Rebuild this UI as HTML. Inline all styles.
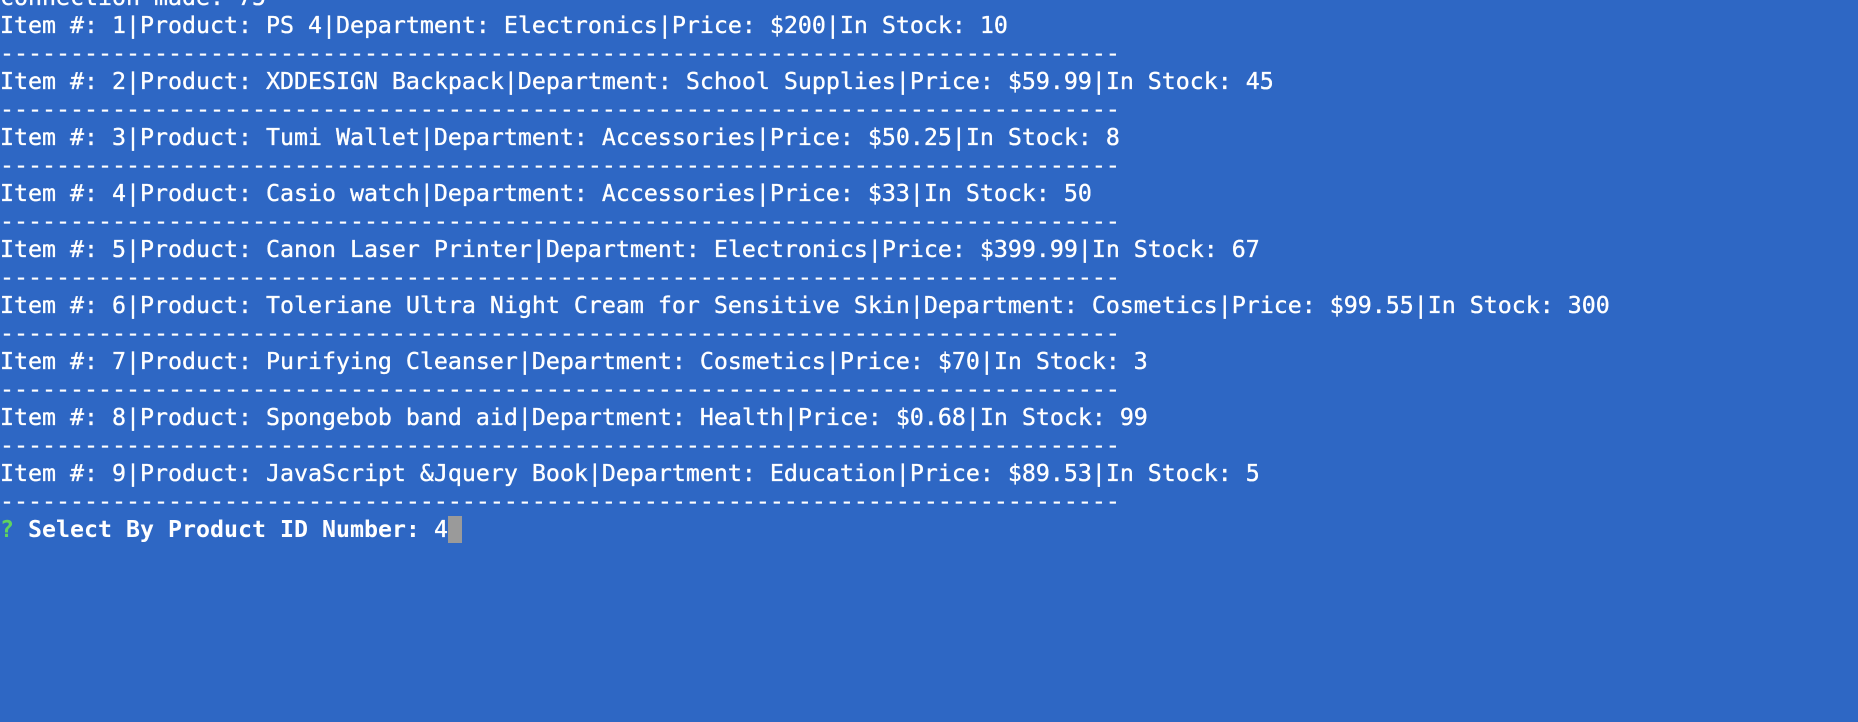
<!DOCTYPE html>
<html><head><meta charset="utf-8"><style>
html,body{margin:0;padding:0;width:1858px;height:722px;overflow:hidden;background:#2E67C4;}
pre{position:absolute;left:0;top:-16px;margin:0;font-family:"DejaVu Sans Mono","Liberation Mono",monospace;font-size:23.25px;line-height:28.02px;color:#fff;-webkit-text-stroke:0.35px #fff;}
.g{color:#5fd35f;font-weight:bold;-webkit-text-stroke:0}
.b{font-weight:bold;-webkit-text-stroke:0}
.c{display:inline-block;width:14px;height:27px;background:#9a9a9a;vertical-align:-6px}
</style></head><body><pre>connection made: 75
Item #: 1|Product: PS 4|Department: Electronics|Price: $200|In Stock: 10
--------------------------------------------------------------------------------
Item #: 2|Product: XDDESIGN Backpack|Department: School Supplies|Price: $59.99|In Stock: 45
--------------------------------------------------------------------------------
Item #: 3|Product: Tumi Wallet|Department: Accessories|Price: $50.25|In Stock: 8
--------------------------------------------------------------------------------
Item #: 4|Product: Casio watch|Department: Accessories|Price: $33|In Stock: 50
--------------------------------------------------------------------------------
Item #: 5|Product: Canon Laser Printer|Department: Electronics|Price: $399.99|In Stock: 67
--------------------------------------------------------------------------------
Item #: 6|Product: Toleriane Ultra Night Cream for Sensitive Skin|Department: Cosmetics|Price: $99.55|In Stock: 300
--------------------------------------------------------------------------------
Item #: 7|Product: Purifying Cleanser|Department: Cosmetics|Price: $70|In Stock: 3
--------------------------------------------------------------------------------
Item #: 8|Product: Spongebob band aid|Department: Health|Price: $0.68|In Stock: 99
--------------------------------------------------------------------------------
Item #: 9|Product: JavaScript &amp;Jquery Book|Department: Education|Price: $89.53|In Stock: 5
--------------------------------------------------------------------------------
<span class="g">?</span> <span class="b">Select By Product ID Number: </span>4<span class="c"></span></pre></body></html>
